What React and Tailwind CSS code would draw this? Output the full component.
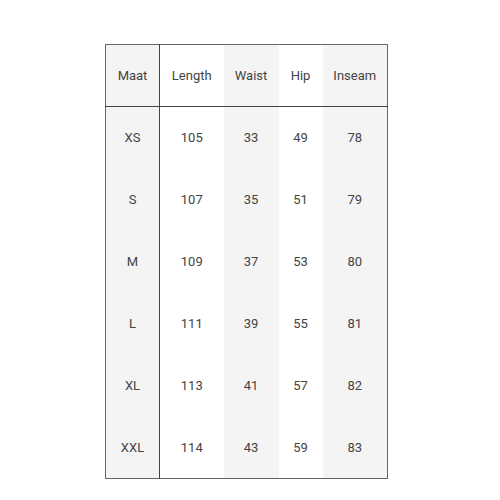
const COLS = [
  { key: 'maat', label: 'Maat', w: 'w-[54px]', shade: true },
  { key: 'length', label: 'Length', w: 'w-[64px]', shade: false },
  { key: 'waist', label: 'Waist', w: 'w-[55px]', shade: true },
  { key: 'hip', label: 'Hip', w: 'w-[44px]', shade: false },
  { key: 'inseam', label: 'Inseam', w: 'w-[65px]', shade: true },
];

const ROWS = [
  ['XS', 105, 33, 49, 78],
  ['S', 107, 35, 51, 79],
  ['M', 109, 37, 53, 80],
  ['L', 111, 39, 55, 81],
  ['XL', 113, 41, 57, 82],
  ['XXL', 114, 43, 59, 83],
];

export default function App() {
  return (
    <div className="w-[500px] h-[500px] bg-white pt-[44px] pl-[105px] font-['Roboto',sans-serif] text-[13px] text-[#444]">
      <table className="border-collapse border border-[#666] table-fixed">
        <thead>
          <tr className="h-[62px] border-b border-[#444]">
            {COLS.map((c, i) => (
              <th
                key={c.key}
                className={`${c.w} p-0 font-normal text-center ${c.shade ? 'bg-[#f4f4f4]' : 'bg-white'} ${i === 0 ? 'border-r border-[#444]' : ''}`}
              >
                {c.label}
              </th>
            ))}
          </tr>
        </thead>
        <tbody>
          {ROWS.map((row) => (
            <tr key={row[0]} className="h-[62px]">
              {row.map((v, i) => (
                <td
                  key={i}
                  className={`p-0 text-center ${COLS[i].shade ? 'bg-[#f4f4f4]' : 'bg-white'} ${i === 0 ? 'border-r border-[#444]' : ''}`}
                >
                  {v}
                </td>
              ))}
            </tr>
          ))}
        </tbody>
      </table>
    </div>
  );
}
